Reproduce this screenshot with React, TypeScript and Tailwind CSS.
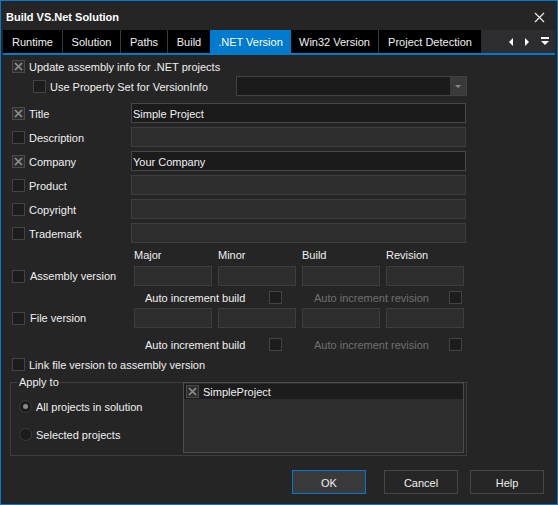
import React from "react";

function Check({ checked = false }: { checked?: boolean }) {
  return (
    <span
      className={
        "shrink-0 w-[13px] h-[13px] border flex items-center justify-center " +
        (checked ? "border-[#4a4a4a] bg-[#2e2e2e]" : "border-[#434343] bg-[#1c1c1c]")
      }
    >
      {checked && (
        <svg width="9" height="9" viewBox="0 0 9 9">
          <path d="M1 1 L8 8 M8 1 L1 8" stroke="#8e8e8e" strokeWidth="1.7" />
        </svg>
      )}
    </span>
  );
}

function Radio({ checked = false }: { checked?: boolean }) {
  return (
    <span className="shrink-0 w-[13px] h-[13px] rounded-full border border-[#3c3c3c] bg-[#1c1c1c] flex items-center justify-center">
      {checked && <span className="w-[5px] h-[5px] rounded-full bg-[#8a8a8a]" />}
    </span>
  );
}

function Field({ value }: { value?: string }) {
  return value ? (
    <div className="w-[335px] h-[20px] border border-[#474747] bg-[#1b1b1b] pl-[1px] pt-[2px] flex items-center text-[#f0f0f0]">
      {value}
    </div>
  ) : (
    <div className="w-[335px] h-[20px] border border-[#3e3e3e] bg-[#2d2d2d]" />
  );
}

function VBox() {
  return <div className="w-[78px] h-[20px] border border-[#3e3e3e] bg-[#2d2d2d]" />;
}

function T({ children, className = "" }: { children: React.ReactNode; className?: string }) {
  return <span className={"pt-[2px] " + className}>{children}</span>;
}

const tabs: { label: string; w: string; active?: boolean; sep?: boolean }[] = [
  { label: "Runtime", w: "w-[60px]", sep: true },
  { label: "Solution", w: "w-[58px]", sep: true },
  { label: "Paths", w: "w-[47px]", sep: true },
  { label: "Build", w: "w-[42px]" },
  { label: ".NET Version", w: "w-[81px]", active: true },
  { label: "Win32 Version", w: "w-[88px]", sep: true },
  { label: "Project Detection", w: "w-[102px]" },
];

const rows: { label: string; checked: boolean; value?: string }[] = [
  { label: "Title", checked: true, value: "Simple Project" },
  { label: "Description", checked: false },
  { label: "Company", checked: true, value: "Your Company" },
  { label: "Product", checked: false },
  { label: "Copyright", checked: false },
  { label: "Trademark", checked: false },
];

function AutoRow() {
  return (
    <div className="flex items-center h-full">
      <T className="ml-[133px] w-[124px]">Auto increment build</T>
      <Check />
      <T className="ml-[32px] w-[135px] text-[#707070]">Auto increment revision</T>
      <Check />
    </div>
  );
}

export default function App() {
  return (
    <div className="w-[558px] h-[505px] bg-[#252526] border border-[#007acc] flex flex-col text-[11px] leading-none text-[#f0f0f0] [font-family:'Liberation_Sans',Arial,sans-serif] overflow-hidden">
      {/* Title bar */}
      <div className="h-[29px] shrink-0 flex items-center justify-between pl-[5px] pr-[12px] pt-[3px]">
        <span className="font-bold text-[11px] text-white pt-[1px]">Build VS.Net Solution</span>
        <svg width="11" height="11" viewBox="0 0 11 11">
          <path d="M1 1 L10 10 M10 1 L1 10" stroke="#e8e8e8" strokeWidth="1.3" />
        </svg>
      </div>

      {/* Tab bar */}
      <div className="mx-[2px] h-[25px] shrink-0 flex border-b-2 border-[#007acc]">
        {tabs.map((t) => (
          <div
            key={t.label}
            className={
              t.w +
              " h-full flex items-center justify-center shrink-0 pt-[2px] " +
              (t.active ? "bg-[#007acc] text-white" : "bg-black text-[#f0f0f0]") +
              (t.sep ? " border-r border-[#3a3a3a]" : "")
            }
          >
            {t.label}
          </div>
        ))}
        <div className="flex-1 bg-[#2d2d30] flex items-center justify-end gap-[10px] pr-[5px]">
          <svg width="6" height="8" viewBox="0 0 6 8">
            <path d="M5 0 L5 8 L1 4 Z" fill="#ffffff" />
          </svg>
          <svg width="6" height="8" viewBox="0 0 6 8">
            <path d="M1 0 L1 8 L5 4 Z" fill="#ffffff" />
          </svg>
          <svg width="10" height="9" viewBox="0 0 10 9">
            <rect x="1" y="0" width="8" height="2" fill="#ffffff" />
            <path d="M1 4 L9 4 L5 8 Z" fill="#ffffff" />
          </svg>
        </div>
      </div>

      {/* Content */}
      <div className="flex flex-col pl-[11px]">
        <div className="mt-[1px] h-[20px] flex items-center gap-[4px]">
          <Check checked />
          <T>Update assembly info for .NET projects</T>
        </div>
        <div className="h-[20px] flex items-center">
          <div className="w-[224px] pl-[21px] flex items-center gap-[4px]">
            <Check />
            <T>Use Property Set for VersionInfo</T>
          </div>
          <div className="w-[231px] h-[20px] border border-[#424242] flex">
            <div className="flex-1 bg-[#1b1b1b]" />
            <div className="w-[16px] bg-[#3a3a3a] flex items-center justify-center">
              <svg width="6" height="3" viewBox="0 0 6 3">
                <path d="M0 0 L6 0 L3 3 Z" fill="#8a8a8a" />
              </svg>
            </div>
          </div>
        </div>

        <div className="mt-[7px] flex flex-col gap-[4px]">
          {rows.map((r) => (
            <div key={r.label} className="h-[20px] flex items-center">
              <div className="w-[119px] flex items-center gap-[4px]">
                <Check checked={r.checked} />
                <T>{r.label}</T>
              </div>
              <Field value={r.value} />
            </div>
          ))}
        </div>

        <div className="mt-[1px] h-[20px] flex items-center pl-[122px]">
          <T className="w-[84px]">Major</T>
          <T className="w-[84px]">Minor</T>
          <T className="w-[84px]">Build</T>
          <T>Revision</T>
        </div>

        <div className="mt-[2px] h-[20px] flex items-center">
          <div className="w-[122px] flex items-center gap-[5px]">
            <Check />
            <span>Assembly version</span>
          </div>
          <div className="flex gap-[6px]">
            <VBox />
            <VBox />
            <VBox />
            <VBox />
          </div>
        </div>

        <div className="h-[22px]">
          <AutoRow />
        </div>

        <div className="h-[20px] flex items-center">
          <div className="w-[122px] flex items-center gap-[5px]">
            <Check />
            <span>File version</span>
          </div>
          <div className="flex gap-[6px]">
            <VBox />
            <VBox />
            <VBox />
            <VBox />
          </div>
        </div>

        <div className="mt-[6px] h-[20px]">
          <AutoRow />
        </div>

        <div className="h-[20px] flex items-center gap-[4px]">
          <Check />
          <T>Link file version to assembly version</T>
        </div>
      </div>

      {/* Apply to group */}
      <div className="relative mt-[8px] ml-[9px] w-[457px] h-[74px] shrink-0 border border-[#3e3e3e] flex">
        <span className="absolute left-[7px] -top-[6px] px-[1px] bg-[#252526]">Apply to</span>
        <div className="w-[172px] flex flex-col pl-[8px] pt-[13px] gap-[8px]">
          <div className="h-[20px] flex items-center gap-[4px]">
            <Radio checked />
            <T>All projects in solution</T>
          </div>
          <div className="h-[20px] flex items-center gap-[4px]">
            <Radio />
            <T>Selected projects</T>
          </div>
        </div>
        <div className="-mt-[1px] mb-[2px] w-[281px] border border-[#4c4c4c] bg-[#2d2d2d] flex flex-col">
          <div className="mt-[1px] h-[15px] bg-[#1c1c1c] flex items-center pl-[2px] gap-[4px]">
            <Check checked />
            <T>SimpleProject</T>
          </div>
        </div>
      </div>

      {/* Buttons */}
      <div className="mt-[14px] flex justify-end pr-[13px]">
        <div className="w-[74px] h-[24px] pt-[2px] border border-[#007acc] bg-[#3a3a3a] flex items-center justify-center">OK</div>
        <div className="ml-[18px] w-[74px] h-[24px] pt-[2px] border border-[#474747] bg-[#262626] flex items-center justify-center">Cancel</div>
        <div className="ml-[12px] w-[74px] h-[24px] pt-[2px] border border-[#474747] bg-[#262626] flex items-center justify-center">Help</div>
      </div>
    </div>
  );
}
